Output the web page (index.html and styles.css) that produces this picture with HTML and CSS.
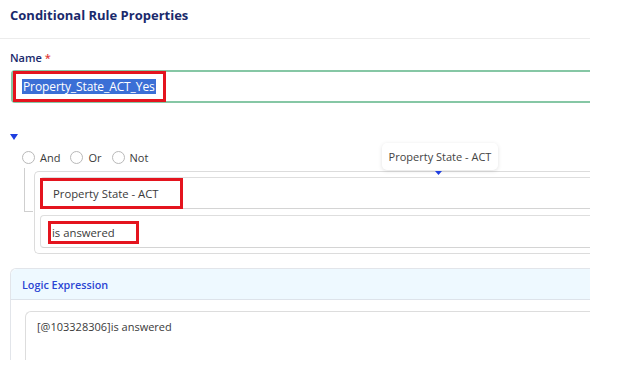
FILE: index.html
```html
<!DOCTYPE html>
<html>
<head>
<meta charset="utf-8">
<link rel="stylesheet" href="styles.css">
</head>
<body>
<div class="frame">
  <div class="header"><h1 class="title">Conditional Rule Properties</h1></div>
  <div class="content">
    <div class="label">Name <span class="req">*</span></div>
    <div class="name-input">
      <span class="mark mark-name"><span class="sel">Property_State_ACT_Yes</span></span>
    </div>
    <svg class="caret" width="8" height="6" viewBox="0 0 8 6"><path d="M0 0 L8 0 L4 6 Z" fill="#1f3fe0"/></svg>
    <div class="radios">
      <span class="radio"></span><span class="rlabel">And</span>
      <span class="radio"></span><span class="rlabel">Or</span>
      <span class="radio"></span><span class="rlabel">Not</span>
    </div>
    <div class="tree">
      <div class="connector"></div>
      <div class="group">
        <div class="field"><span class="mark mark-q">Property State - ACT</span></div>
        <div class="field"><span class="mark mark-op">is answered</span></div>
      </div>
      <div class="tooltip">Property State - ACT</div>
      <svg class="drop" width="7" height="4" viewBox="0 0 7 4"><path d="M0 0 L7 0 L3.5 4 Z" fill="#1f3fe0"/></svg>
    </div>
    <div class="panel">
      <div class="panel-head">Logic Expression</div>
      <div class="panel-body">
        <div class="expr">[@103328306]is answered</div>
      </div>
    </div>
  </div>
</div>
</body>
</html>
```
FILE: styles.css
```css
* { box-sizing: border-box; }
body { margin: 0; background: #fff; font-family: "Open Sans", "Liberation Sans", sans-serif; }
.frame { width: 590px; height: 360px; overflow: hidden; background: #fff; }
.header { height: 39px; border-bottom: 1px solid #ececec; padding: 6px 10px 0; }
.title { margin: 0; font-size: 13px; line-height: 18px; font-weight: 700; color: #1a2a6c; }
.content { padding-left: 10px; }
.label { margin-top: 12px; font-size: 11px; line-height: 14px; font-weight: 600; color: #1a2a6c; }
.req { color: #e03a3a; }
.name-input { margin-top: 5px; margin-left: 1px; height: 33px; border: 2px solid #86c7a5; border-right: none; border-radius: 4px 0 0 4px; display: flex; align-items: stretch; }
.mark { border: 3px solid #e4141e; display: inline-flex; align-items: center; }
.mark-name { margin: -1px 0 -1px 0; padding: 0 7px 0 6px; }
.sel { background: #3b6fd6; color: #fff; font-size: 12px; line-height: 15px; font-weight: 500; padding: 0 1px; letter-spacing: -0.1px; }
.caret { display: block; margin-top: 31px; }
.radios { margin-top: 10px; padding-left: 12px; height: 14px; display: flex; align-items: center; font-size: 11px; color: #3a3a3a; }
.radio { width: 13px; height: 13px; border: 1px solid #b9b9b9; border-radius: 50%; }
.rlabel { margin: 0 10px 0 5px; }
.tree { position: relative; display: flex; padding-left: 14px; }
.connector { width: 9px; height: 44px; margin-top: 4px; border-left: 1px solid #cfcfcf; border-bottom: 1px solid #cfcfcf; }
.group { flex: 1; margin-top: 7px; margin-left: 1px; height: 83px; border: 1px solid #dcdcdc; border-right: none; border-radius: 5px 0 0 5px; padding: 5px 0 0 5px; }
.field { height: 32px; border: 1px solid #dedede; border-bottom-color: #d4d4d4; border-right: none; border-radius: 4px 0 0 4px; display: flex; font-size: 11.3px; color: #3a3a3a; }
.field + .field { margin-top: 6px; height: 33px; }
.mark-q { margin: 0 0 -1px -1px; padding-left: 10px; width: 143px; }
.mark-op { margin: 5px 0 3px 7px; padding-left: 1px; width: 91px; }
.tooltip { position: absolute; left: 372px; top: -21px; width: 116px; height: 27px; background: #fff; border-radius: 5px; box-shadow: 0 1px 4px rgba(0,0,0,0.12); font-size: 11px; color: #444; display: flex; align-items: center; justify-content: center; }
.drop { position: absolute; left: 425px; top: 7px; }
.panel { margin-top: 14px; border: 1px solid #e2e5ea; border-right: none; border-radius: 6px 0 0 0; height: 100px; }
.panel-head { height: 31px; background: #eef9ff; border-bottom: 1px solid #dde3ea; border-radius: 6px 0 0 0; padding-left: 11px; display: flex; align-items: center; font-size: 10.8px; font-weight: 600; color: #2b45d3; }
.panel-body { padding: 11px 0 0 14px; }
.expr { height: 60px; border: 1px solid #dddddd; border-right: none; border-radius: 6px 0 0 0; padding: 8px 0 0 11px; font-size: 11px; line-height: 14px; color: #3a3a3a; }
```
